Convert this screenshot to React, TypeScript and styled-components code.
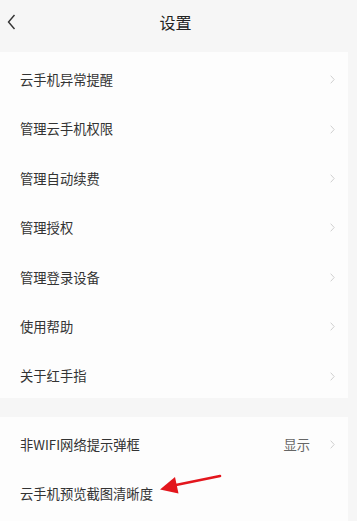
import React from "react";
import styled, { createGlobalStyle } from "styled-components";

const Global = createGlobalStyle`
  html, body { margin: 0; padding: 0; background: #f6f6f6; }
  body { font-family: "Noto Sans CJK SC", "Noto Sans", sans-serif; }
  * { box-sizing: border-box; }
`;

const Page = styled.div`
  width: 357px;
  height: 521px;
  overflow: hidden;
  background: #f6f6f6;
  display: flex;
  flex-direction: column;
`;

const Header = styled.div`
  height: 44px;
  display: flex;
  align-items: center;
  justify-content: center;
  position: relative;
  flex-shrink: 0;
`;

const Back = styled.div`
  position: absolute;
  left: 6px;
  top: 13px;
  width: 12px;
  height: 18px;
  display: flex;
`;

const Title = styled.div`
  font-size: 16px;
  color: #222;
  line-height: 1;
  margin-right: 6px;
`;

const Card = styled.div<{ $top: number }>`
  margin: ${(p) => p.$top}px 9px 0 0;
  background: #fdfdfd;
  display: flex;
  flex-direction: column;
`;

const Row = styled.div<{ $h: number }>`
  height: ${(p) => p.$h}px;
  padding: 6px 13px 0 20px;
  display: flex;
  align-items: center;
  position: relative;
`;

const Label = styled.div`
  flex: 1;
  font-size: 13.3px;
  color: #333;
  line-height: 1;
`;

const Value = styled.div`
  font-size: 13.3px;
  color: #666;
  margin-right: 20px;
  line-height: 1;
`;

const Arrow = styled.svg`
  position: absolute;
  left: 151px;
  top: 9px;
  overflow: visible;
`;

const Chevron = () => (
  <svg width="5" height="9" viewBox="0 0 5 9">
    <path d="M0.7 0.7 L4.2 4.5 L0.7 8.3" fill="none" stroke="#cfcfcf" strokeWidth="1" />
  </svg>
);

const items1 = [
  "云手机异常提醒",
  "管理云手机权限",
  "管理自动续费",
  "管理授权",
  "管理登录设备",
  "使用帮助",
  "关于红手指",
];

export default function App() {
  return (
    <Page>
      <Global />
      <Header>
        <Back>
          <svg width="12" height="18" viewBox="0 0 12 18">
            <path d="M8.5 2 L2.5 9 L8.5 16" fill="none" stroke="#333" strokeWidth="1.4" />
          </svg>
        </Back>
        <Title>设置</Title>
      </Header>
      <Card $top={8}>
        {items1.map((t) => (
          <Row key={t} $h={49.4}>
            <Label>{t}</Label>
            <Chevron />
          </Row>
        ))}
      </Card>
      <Card $top={19} style={{ flex: 1 }}>
        <Row $h={49.4}>
          <Label>非WIFI网络提示弹框</Label>
          <Value>显示</Value>
          <Chevron />
        </Row>
        <Row $h={49.4}>
          <Label>云手机预览截图清晰度</Label>
          <Arrow width="72" height="30" viewBox="0 0 72 30">
            <path d="M69 1 L20 11" stroke="#e3161d" strokeWidth="2.6" strokeLinecap="round" />
            <path d="M9 14.5 L24 2 L27.5 18.5 Z" fill="#e3161d" />
          </Arrow>
        </Row>
      </Card>
    </Page>
  );
}
